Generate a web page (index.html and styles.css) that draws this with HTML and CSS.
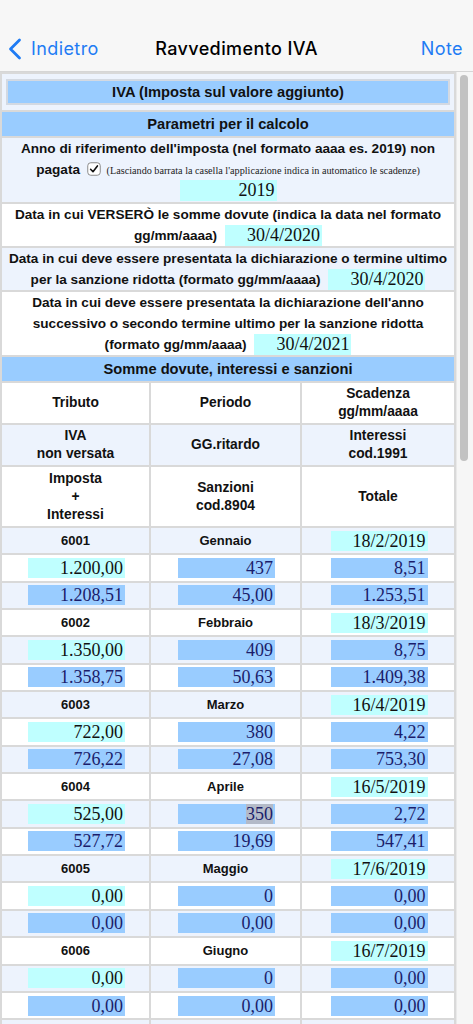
FILE: index.html
```html
<!DOCTYPE html>
<html lang="it">
<head>
<meta charset="utf-8">
<title>Ravvedimento IVA</title>
<link rel="stylesheet" href="styles.css">
</head>
<body>
<header class="nav">
  <a class="nav-back">
    <svg class="chev" viewBox="0 0 14 22" width="14" height="22"><path d="M11.5 2 L2.5 11 L11.5 20" fill="none" stroke="currentColor" stroke-width="2.8" stroke-linecap="round" stroke-linejoin="round"/></svg>
    <span>Indietro</span>
  </a>
  <div class="nav-title">Ravvedimento IVA</div>
  <a class="nav-note">Note</a>
</header>
<div class="view">
  <div class="content">
    <table class="grid">
      <colgroup><col class="c1"><col class="c2"><col class="c3"></colgroup>
      <tr class="r-title"><td colspan="3"><div class="title-box">IVA (Imposta sul valore aggiunto)</div></td></tr>
      <tr class="r-band"><td colspan="3">Parametri per il calcolo</td></tr>
      <tr class="r-param r-anno"><td colspan="3">
        <span class="line">Anno di riferimento dell'imposta (nel formato aaaa es. 2019) non</span>
        <span class="line">pagata <span class="chk"><svg viewBox="0 0 14 14" width="14" height="14"><rect x="0.75" y="0.75" width="12.5" height="12.5" rx="3" fill="#fff" stroke="#8a8a8a" stroke-width="1"/><path d="M3.6 7.3 L6 9.7 L10.4 3.9" fill="none" stroke="#111" stroke-width="1.6" stroke-linecap="round" stroke-linejoin="round"/></svg></span> <span class="small">(Lasciando barrata la casella l'applicazione indica in automatico le scadenze)</span></span>
        <span class="line"><span class="inp cyan">2019</span></span>
      </td></tr>
      <tr class="r-param r-2"><td colspan="3">
        <span class="line">Data in cui VERSERÒ le somme dovute (indica la data nel formato</span>
        <span class="line">gg/mm/aaaa) <span class="inp cyan gap">30/4/2020</span></span>
      </td></tr>
      <tr class="r-param r-2"><td colspan="3">
        <span class="line">Data in cui deve essere presentata la dichiarazione o termine ultimo</span>
        <span class="line">per la sanzione ridotta (formato gg/mm/aaaa) <span class="inp cyan gap">30/4/2020</span></span>
      </td></tr>
      <tr class="r-param r-3"><td colspan="3">
        <span class="line">Data in cui deve essere presentata la dichiarazione dell'anno</span>
        <span class="line">successivo o secondo termine ultimo per la sanzione ridotta</span>
        <span class="line">(formato gg/mm/aaaa) <span class="inp cyan gap">30/4/2021</span></span>
      </td></tr>
      <tr class="r-band"><td colspan="3">Somme dovute, interessi e sanzioni</td></tr>
      <tr class="r-head h1"><td>Tributo</td><td>Periodo</td><td>Scadenza<br>gg/mm/aaaa</td></tr>
      <tr class="r-head h2"><td>IVA<br>non versata</td><td>GG.ritardo</td><td>Interessi<br>cod.1991</td></tr>
      <tr class="r-head h3"><td>Imposta<br>+<br>Interessi</td><td>Sanzioni<br>cod.8904</td><td>Totale</td></tr>

      <tr class="r-data"><td class="lbl">6001</td><td class="lbl">Gennaio</td><td><span class="inp cyan">18/2/2019</span></td></tr>
      <tr class="r-data"><td><span class="inp cyan">1.200,00</span></td><td><span class="inp blue">437</span></td><td><span class="inp blue">8,51</span></td></tr>
      <tr class="r-data"><td><span class="inp blue">1.208,51</span></td><td><span class="inp blue">45,00</span></td><td><span class="inp blue">1.253,51</span></td></tr>

      <tr class="r-data"><td class="lbl">6002</td><td class="lbl">Febbraio</td><td><span class="inp cyan">18/3/2019</span></td></tr>
      <tr class="r-data"><td><span class="inp cyan">1.350,00</span></td><td><span class="inp blue">409</span></td><td><span class="inp blue">8,75</span></td></tr>
      <tr class="r-data"><td><span class="inp blue">1.358,75</span></td><td><span class="inp blue">50,63</span></td><td><span class="inp blue">1.409,38</span></td></tr>

      <tr class="r-data"><td class="lbl">6003</td><td class="lbl">Marzo</td><td><span class="inp cyan">16/4/2019</span></td></tr>
      <tr class="r-data"><td><span class="inp cyan">722,00</span></td><td><span class="inp blue">380</span></td><td><span class="inp blue">4,22</span></td></tr>
      <tr class="r-data"><td><span class="inp blue">726,22</span></td><td><span class="inp blue">27,08</span></td><td><span class="inp blue">753,30</span></td></tr>

      <tr class="r-data"><td class="lbl">6004</td><td class="lbl">Aprile</td><td><span class="inp cyan">16/5/2019</span></td></tr>
      <tr class="r-data"><td><span class="inp cyan">525,00</span></td><td><span class="inp blue"><span class="sel">350</span></span></td><td><span class="inp blue">2,72</span></td></tr>
      <tr class="r-data"><td><span class="inp blue">527,72</span></td><td><span class="inp blue">19,69</span></td><td><span class="inp blue">547,41</span></td></tr>

      <tr class="r-data"><td class="lbl">6005</td><td class="lbl">Maggio</td><td><span class="inp cyan">17/6/2019</span></td></tr>
      <tr class="r-data"><td><span class="inp cyan">0,00</span></td><td><span class="inp blue">0</span></td><td><span class="inp blue">0,00</span></td></tr>
      <tr class="r-data"><td><span class="inp blue">0,00</span></td><td><span class="inp blue">0,00</span></td><td><span class="inp blue">0,00</span></td></tr>

      <tr class="r-data"><td class="lbl">6006</td><td class="lbl">Giugno</td><td><span class="inp cyan">16/7/2019</span></td></tr>
      <tr class="r-data"><td><span class="inp cyan">0,00</span></td><td><span class="inp blue">0</span></td><td><span class="inp blue">0,00</span></td></tr>
      <tr class="r-data"><td><span class="inp blue">0,00</span></td><td><span class="inp blue">0,00</span></td><td><span class="inp blue">0,00</span></td></tr>

      <tr class="r-data"><td></td><td></td><td></td></tr>
    </table>
  </div>
  <div class="scrollbar"><div class="thumb"></div></div>
</div>
</body>
</html>
```
FILE: styles.css
```css
html, body {
  margin: 0;
  padding: 0;
}
body {
  width: 473px;
  height: 1024px;
  overflow: hidden;
  background: #ffffff;
  font-family: "Liberation Sans", Arial, sans-serif;
  color: #111;
}
.nav {
  height: 72px;
  box-sizing: border-box;
  border-bottom: 1px solid #d6d6d6;
  background: #f7f7f7;
  display: flex;
  align-items: flex-end;
  justify-content: space-between;
  padding: 0 10px 11px 8px;
  position: relative;
  font-family: Inter, "Liberation Sans", sans-serif;
  font-size: 18px;
  letter-spacing: 0.4px;
  line-height: 22px;
}
.nav-back {
  display: flex;
  align-items: center;
  gap: 9px;
  color: #1f7cf4;
}
.chev { display: block; }
.nav-title {
  position: absolute;
  left: 0;
  right: 0;
  bottom: 11px;
  text-align: center;
  font-weight: 500;
  color: #000;
  pointer-events: none;
}
.nav-note {
  color: #1f7cf4;
}
.view {
  display: flex;
  height: 952px;
  overflow: hidden;
}
.content {
  width: 456px;
  flex: none;
  overflow: hidden;
}
.scrollbar {
  flex: 1;
  background: #f6f6f6;
  border-left: 1px solid #e9e9e9;
  padding: 3px 4px 0 3px;
  box-sizing: border-box;
}
.thumb {
  width: 8px;
  height: 386px;
  border-radius: 4px;
  background: #c2c2c2;
}
.grid {
  width: 456px;
  border-collapse: separate;
  border-spacing: 2px;
  background: #d9d9d9;
  table-layout: fixed;
  font-size: 13.8px;
  font-weight: bold;
  color: #111;
}
.c1 { width: 147px; }
.c2 { width: 149px; }
.c3 { width: 152px; }
.grid td {
  padding: 0;
  text-align: center;
  vertical-align: middle;
}
.grid tr:nth-child(odd) td { background: #edf3fd; }
.grid tr:nth-child(even) td { background: #ffffff; }
.grid tr.r-band td {
  background: #99ccff;
  height: 24px;
  font-size: 14.7px;
}
.r-title td { height: 36px; padding: 0 4px; }
.title-box {
  background: #99ccff;
  border: 2px solid #d3d9e2;
  height: 22px;
  line-height: 22px;
  font-size: 14.7px;
}
.r-param td {
  font-size: 13.6px;
  line-height: 21px;
  vertical-align: top;
}
.r-anno td { height: 64px; }
.r-2 td { height: 42px; }
.r-3 td { height: 62px; }
.line {
  display: block;
  height: 21px;
  white-space: nowrap;
  overflow: visible;
}
.chk {
  display: inline-block;
  height: 14px;
  vertical-align: -2px;
  margin: 0 2px 0 3px;
}
.chk svg { display: block; }
.small {
  font-family: "Liberation Serif", "Times New Roman", serif;
  font-weight: normal;
  font-size: 10.2px;
  color: #222;
}
.r-head td { line-height: 18px; }
.h1 td { height: 40px; }
.h2 td { height: 40px; }
.h3 td { height: 59px; }
.r-data td { height: 25.35px; }
.grid td.lbl { font-size: 13px; }
.inp {
  display: inline-block;
  width: 97px;
  height: 20px;
  line-height: 21px;
  box-sizing: border-box;
  padding-right: 2px;
  text-align: right;
  vertical-align: middle;
  font-family: "Liberation Serif", "Times New Roman", serif;
  font-weight: normal;
  font-size: 18px;
  overflow: hidden;
}
.r-data .inp { margin-left: 2px; }
.cyan { background: #bfffff; color: #111; }
.blue { background: #99ccff; color: #1b1d6b; }
.r-param .inp { height: 21px; vertical-align: top; }
.gap { margin-left: 4px; }
.sel {
  display: inline-block;
  height: 20px;
  background: #b3bac8;
}
```
